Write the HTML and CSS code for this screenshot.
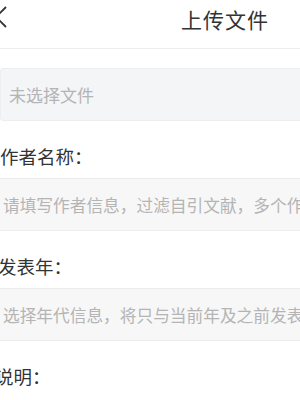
FILE: index.html
```html
<!DOCTYPE html>
<html lang="zh-CN">
<head>
  <meta charset="UTF-8" />
  <meta name="viewport" content="width=device-width, initial-scale=1.0"/>
  <title>上传文件</title>
  <link rel="stylesheet" href="styles.css">
</head>
<body>
  <div class="page">
    <header class="topbar">
      <a class="back" href="#">
        <svg width="14" height="22" viewBox="0 0 14 22"><path d="M11 1 L1 11 L11 21" fill="none" stroke="#333" stroke-width="1.8"/></svg>
      </a>
      <h1>上传文件</h1>
    </header>

    <form class="upload">
      <div class="file-box">未选择文件</div>

      <label class="field-label" for="author">作者名称：</label>
      <input class="field" type="text" id="author" placeholder="请填写作者信息，过滤自引文献，多个作者请用逗号隔开"/>

      <label class="field-label shift-a" for="year">发表年：</label>
      <input class="field" type="text" id="year" placeholder="选择年代信息，将只与当前年及之前发表的文献比对"/>

      <label class="field-label shift-b" for="note">说明：</label>
    </form>
  </div>
</body>
</html>
```

FILE: styles.css
```css
:root {
  --text-color: #333;
  --hint-color: #b4b4b4;
  --line-color: #ececec;
}

html, body {
  margin: 0;
  overflow: hidden;
}

body {
  font-family: "Noto Sans CJK SC", "Noto Sans", sans-serif;
  color: var(--text-color);
  background: #fff;
}

.page {
  width: 450px;
}

.topbar {
  position: relative;
  height: 38px;
  padding-bottom: 10px;
  border-bottom: 1px solid #eeeeee;
  display: flex;
  align-items: center;
  justify-content: center;
}

.back {
  position: absolute;
  left: -5px;
  top: 6px;
  display: block;
  line-height: 0;
}

.topbar h1 {
  margin: 0;
  font-size: 21px;
  font-weight: normal;
  letter-spacing: 1px;
  color: var(--text-color);
}

.upload {
  margin-top: 19px;
  display: flex;
  flex-direction: column;
}

.file-box {
  height: 51px;
  line-height: 51px;
  padding-left: 8px;
  background: #f3f5f7;
  border: 1px solid #eceef0;
  border-radius: 3px;
  font-size: 17px;
  color: var(--hint-color);
}

.field-label {
  margin: 22px 0 9px;
  font-size: 18.5px;
  line-height: 26px;
}

.shift-a {
  margin-left: -2px;
}

.shift-b {
  margin-left: -5px;
}

.field {
  box-sizing: border-box;
  width: 100%;
  height: 53px;
  margin: 0;
  padding: 0 0 0 3px;
  background: #f7f7f7;
  border: none;
  border-top: 1px solid var(--line-color);
  border-bottom: 1px solid var(--line-color);
  font-family: inherit;
  font-size: 16.7px;
  color: var(--text-color);
  outline: none;
}

.field::placeholder {
  color: var(--hint-color);
}
```
